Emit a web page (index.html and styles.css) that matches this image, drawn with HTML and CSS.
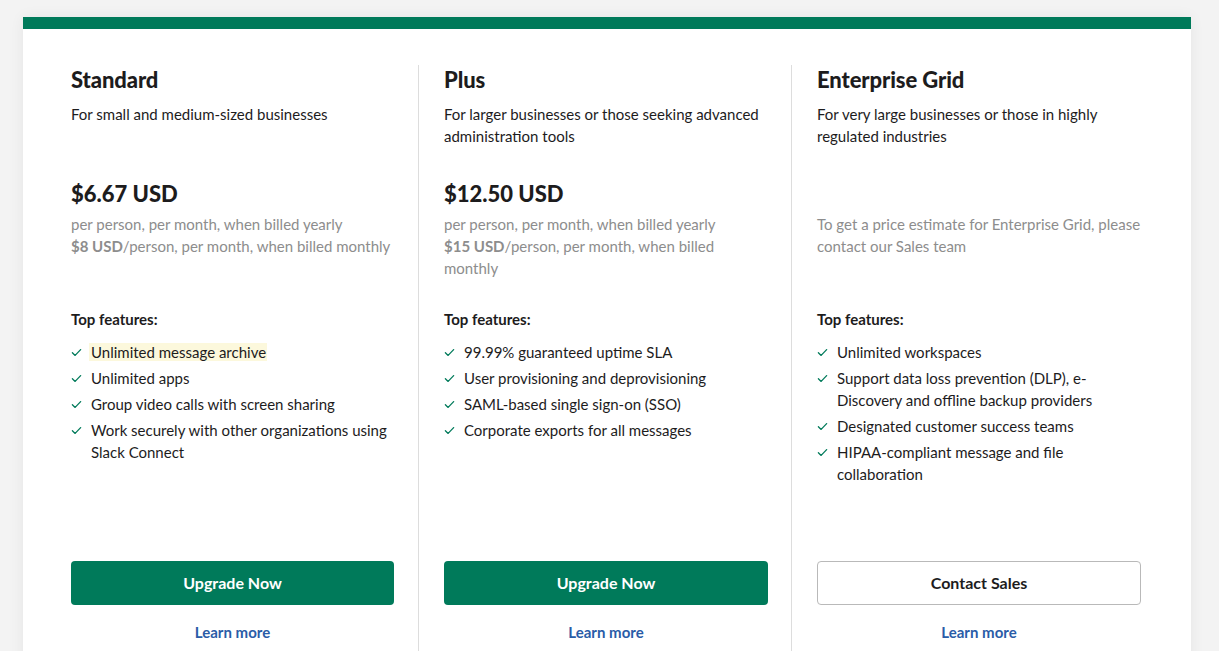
FILE: index.html
```html
<!DOCTYPE html>
<html lang="en">
<head>
<meta charset="utf-8">
<title>Plans</title>
<link rel="stylesheet" href="styles.css">
</head>
<body>
<main class="card">
  <div class="plans">
    <section class="plan">
      <h2 class="plan-title">Standard</h2>
      <p class="plan-desc">For small and medium-sized businesses</p>
      <div class="pricing">
        <div class="price">$6.67 USD</div>
        <p class="price-note">per person, per month, when billed yearly<br><strong>$8 USD</strong>/person, per month, when billed monthly</p>
      </div>
      <div class="features">
        <h3 class="features-title">Top features:</h3>
        <ul class="feature-list">
          <li><span class="check"><svg viewBox="0 0 12 12" width="11" height="11"><path d="M1.5 6.3 L4.5 9.2 L10.5 2.8" fill="none" stroke="currentColor" stroke-width="1.4" stroke-linecap="round" stroke-linejoin="round"/></svg></span><span><mark class="highlight">Unlimited message archive</mark></span></li>
          <li><span class="check"><svg viewBox="0 0 12 12" width="11" height="11"><path d="M1.5 6.3 L4.5 9.2 L10.5 2.8" fill="none" stroke="currentColor" stroke-width="1.4" stroke-linecap="round" stroke-linejoin="round"/></svg></span><span>Unlimited apps</span></li>
          <li><span class="check"><svg viewBox="0 0 12 12" width="11" height="11"><path d="M1.5 6.3 L4.5 9.2 L10.5 2.8" fill="none" stroke="currentColor" stroke-width="1.4" stroke-linecap="round" stroke-linejoin="round"/></svg></span><span>Group video calls with screen sharing</span></li>
          <li><span class="check"><svg viewBox="0 0 12 12" width="11" height="11"><path d="M1.5 6.3 L4.5 9.2 L10.5 2.8" fill="none" stroke="currentColor" stroke-width="1.4" stroke-linecap="round" stroke-linejoin="round"/></svg></span><span>Work securely with other organizations using Slack Connect</span></li>
        </ul>
      </div>
      <a class="btn btn-primary" href="#">Upgrade Now</a>
      <a class="learn" href="#">Learn more</a>
    </section>
    <section class="plan">
      <h2 class="plan-title">Plus</h2>
      <p class="plan-desc">For larger businesses or those seeking advanced administration tools</p>
      <div class="pricing">
        <div class="price">$12.50 USD</div>
        <p class="price-note">per person, per month, when billed yearly<br><strong>$15 USD</strong>/person, per month, when billed monthly</p>
      </div>
      <div class="features">
        <h3 class="features-title">Top features:</h3>
        <ul class="feature-list">
          <li><span class="check"><svg viewBox="0 0 12 12" width="11" height="11"><path d="M1.5 6.3 L4.5 9.2 L10.5 2.8" fill="none" stroke="currentColor" stroke-width="1.4" stroke-linecap="round" stroke-linejoin="round"/></svg></span><span>99.99% guaranteed uptime SLA</span></li>
          <li><span class="check"><svg viewBox="0 0 12 12" width="11" height="11"><path d="M1.5 6.3 L4.5 9.2 L10.5 2.8" fill="none" stroke="currentColor" stroke-width="1.4" stroke-linecap="round" stroke-linejoin="round"/></svg></span><span>User provisioning and deprovisioning</span></li>
          <li><span class="check"><svg viewBox="0 0 12 12" width="11" height="11"><path d="M1.5 6.3 L4.5 9.2 L10.5 2.8" fill="none" stroke="currentColor" stroke-width="1.4" stroke-linecap="round" stroke-linejoin="round"/></svg></span><span>SAML-based single sign-on (SSO)</span></li>
          <li><span class="check"><svg viewBox="0 0 12 12" width="11" height="11"><path d="M1.5 6.3 L4.5 9.2 L10.5 2.8" fill="none" stroke="currentColor" stroke-width="1.4" stroke-linecap="round" stroke-linejoin="round"/></svg></span><span>Corporate exports for all messages</span></li>
        </ul>
      </div>
      <a class="btn btn-primary" href="#">Upgrade Now</a>
      <a class="learn" href="#">Learn more</a>
    </section>
    <section class="plan">
      <h2 class="plan-title">Enterprise Grid</h2>
      <p class="plan-desc">For very large businesses or those in highly regulated industries</p>
      <div class="pricing">
        <div class="price"></div>
        <p class="price-note">To get a price estimate for Enterprise Grid, please contact our Sales team</p>
      </div>
      <div class="features">
        <h3 class="features-title">Top features:</h3>
        <ul class="feature-list">
          <li><span class="check"><svg viewBox="0 0 12 12" width="11" height="11"><path d="M1.5 6.3 L4.5 9.2 L10.5 2.8" fill="none" stroke="currentColor" stroke-width="1.4" stroke-linecap="round" stroke-linejoin="round"/></svg></span><span>Unlimited workspaces</span></li>
          <li><span class="check"><svg viewBox="0 0 12 12" width="11" height="11"><path d="M1.5 6.3 L4.5 9.2 L10.5 2.8" fill="none" stroke="currentColor" stroke-width="1.4" stroke-linecap="round" stroke-linejoin="round"/></svg></span><span>Support data loss prevention (DLP), e-Discovery and offline backup providers</span></li>
          <li><span class="check"><svg viewBox="0 0 12 12" width="11" height="11"><path d="M1.5 6.3 L4.5 9.2 L10.5 2.8" fill="none" stroke="currentColor" stroke-width="1.4" stroke-linecap="round" stroke-linejoin="round"/></svg></span><span>Designated customer success teams</span></li>
          <li><span class="check"><svg viewBox="0 0 12 12" width="11" height="11"><path d="M1.5 6.3 L4.5 9.2 L10.5 2.8" fill="none" stroke="currentColor" stroke-width="1.4" stroke-linecap="round" stroke-linejoin="round"/></svg></span><span>HIPAA-compliant message and file collaboration</span></li>
        </ul>
      </div>
      <a class="btn btn-outline" href="#">Contact Sales</a>
      <a class="learn" href="#">Learn more</a>
    </section>
  </div>
</main>
</body>
</html>
```

FILE: styles.css
```css
html, body {
  margin: 0;
  padding: 0;
  overflow: hidden;
}
body {
  background: #f3f3f3;
  font-family: Lato, "Liberation Sans", sans-serif;
  color: #1d1c1d;
  padding: 17px 28px 0 23px;
  height: 651px;
  box-sizing: border-box;
}
.card {
  background: #fff;
  border-top: 12px solid #007a5a;
  box-shadow: 0 0 14px rgba(0, 0, 0, 0.06);
  padding: 36px 27px 40px 24px;
}
.plans {
  display: grid;
  grid-template-columns: 371px 373px 373px;
}
.plan {
  display: flex;
  flex-direction: column;
  padding: 0 24px 40px;
}
.plan + .plan {
  border-left: 1px solid #dddddd;
  padding-left: 25px;
  padding-right: 23px;
}
.plan-title {
  margin: 0;
  font-size: 22px;
  line-height: 30px;
  font-weight: 900;
  letter-spacing: -0.1px;
}
.plan-desc {
  margin: 8px 0 0;
  font-size: 15px;
  line-height: 22px;
  min-height: 44px;
}
.pricing {
  margin-top: 32px;
  min-height: 100px;
}
.price {
  font-size: 22px;
  line-height: 30px;
  font-weight: 900;
  height: 30px;
}
.price-note {
  margin: 4px 0 0;
  font-size: 15px;
  line-height: 22px;
  color: #8d8d8d;
}
.price-note strong {
  font-weight: 700;
}
.features {
  margin-top: 29px;
  min-height: 253px;
}
.features-title {
  margin: 0;
  font-size: 15px;
  line-height: 22px;
  font-weight: 700;
}
.feature-list {
  list-style: none;
  margin: 11px 0 0;
  padding: 0;
}
.feature-list li {
  display: flex;
  font-size: 15px;
  line-height: 22px;
  margin-bottom: 4px;
}
.check {
  flex: 0 0 20px;
  color: #007a5a;
  display: flex;
  align-items: flex-start;
  padding-top: 6px;
}
.highlight {
  background: #fcf8dc;
  color: inherit;
  padding: 0 1px 0 2px;
  margin-left: -2px;
}
.btn {
  display: flex;
  align-items: center;
  justify-content: center;
  height: 44px;
  box-sizing: border-box;
  border-radius: 4px;
  font-size: 16px;
  font-weight: 700;
  text-decoration: none;
  padding-bottom: 1px;
}
.btn-primary {
  background: #007a5a;
  color: #fff;
}
.btn-outline {
  background: #fff;
  color: #1d1c1d;
  border: 1px solid #b9b9b9;
}
.learn {
  margin-top: 16px;
  text-align: center;
  font-size: 15px;
  line-height: 22px;
  font-weight: 700;
  color: #2a5ca7;
  text-decoration: none;
}
```
